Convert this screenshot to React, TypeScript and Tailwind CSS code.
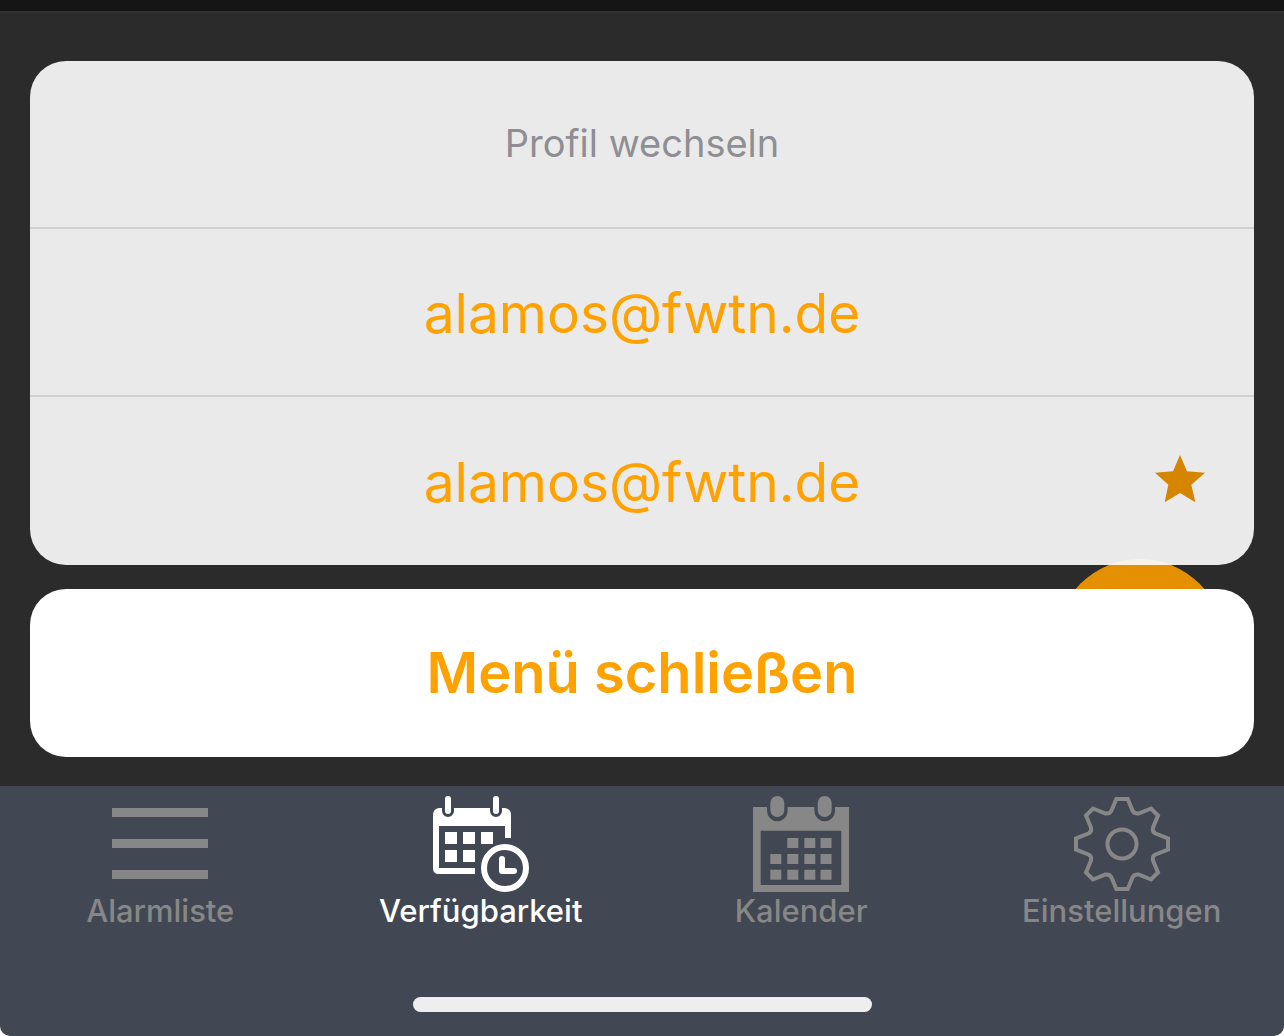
import type { ComponentType } from 'react'
import { clsx } from 'clsx'

function ListIcon() {
  return (
    <svg className="size-24" viewBox="0 0 96 96" stroke="currentColor" strokeWidth="9" aria-hidden="true">
      <path d="M0 16.5H96M0 47.5H96M0 78.5H96" />
    </svg>
  )
}

function AvailabilityIcon() {
  return (
    <svg className="size-24" viewBox="0 0 96 96" fill="currentColor" aria-hidden="true">
      {/* Calendar frame, cut out around the rings */}
      <path d="M6 12H9V15A6 6 0 0 0 21 15V12H57V15A6 6 0 0 0 69 15V12H72Q78 13 78 19V42H72V30H6V72H42V78H6Q0 78 0 72V19Q0 13 6 12Z" />
      <rect x="12" y="0" width="6" height="18" rx="3" />
      <rect x="60" y="0" width="6" height="18" rx="3" />
      {/* Days */}
      <path d="M12 36h12v12H12zM30 36h12v12H30zM48 36h12v12H48zM12 54h12v12H12zM30 54h12v12H30z" />
      {/* Clock */}
      <circle cx="72" cy="72" r="21" fill="none" stroke="currentColor" strokeWidth="6" />
      <path d="M69 63V75H81" fill="none" stroke="currentColor" strokeWidth="6" strokeLinecap="round" strokeLinejoin="round" />
    </svg>
  )
}

function CalendarIcon() {
  return (
    <svg className="size-24" viewBox="0 0 96 96" fill="currentColor" aria-hidden="true">
      <path
        fillRule="evenodd"
        d="M0 11H14V15A10.3 10.3 0 0 0 34.6 15V11H61.4V15A10.3 10.3 0 0 0 82 15V11H96V96H0ZM7.7 34.7V89H88.3V34.7Z"
      />
      <rect x="17.3" y="0" width="14" height="21" rx="7" />
      <rect x="64.7" y="0" width="14" height="21" rx="7" />
      <path d="M34.3 42h11v10h-11zM51.3 42h11v10h-11zM67.5 42h11v10h-11z" />
      <path d="M17.3 58h11v10h-11zM34.3 58h11v10h-11zM51.3 58h11v10h-11zM67.5 58h11v10h-11z" />
      <path d="M17.3 73.7h11v10h-11zM34.3 73.7h11v10h-11zM51.3 73.7h11v10h-11zM67.5 73.7h11v10h-11z" />
    </svg>
  )
}

function GearIcon() {
  return (
    <svg className="size-24" viewBox="0 0 96 96" fill="none" stroke="currentColor" strokeWidth="4" aria-hidden="true">
      <path d="M42.3 3H53.7L58.5 14.5Q60 18 64.5 17.5L77 12.5L84 19.5L79 31.5Q78 36 81.5 37.5L94 42.3V53.7L81.5 58.5Q78 60 79 64.5L84 76.5L77 83.5L64.5 78.5Q60 78 58.5 81.5L53.7 93H42.3L37.5 81.5Q36 78 31.5 78.5L19 83.5L12 76.5L17 64.5Q18 60 14.5 58.5L2 53.7V42.3L14.5 37.5Q18 36 17 31.5L12 19.5L19 12.5L31.5 17.5Q36 18 37.5 14.5Z" />
      <circle cx="48" cy="48" r="14.5" />
    </svg>
  )
}

function StarIcon() {
  return (
    <svg className="h-12 w-[50px]" viewBox="0 0 150 144" fill="currentColor" aria-hidden="true">
      <path d="M75 0L96 49L150 53L109 89L121 142L75 114L29 142L40 89L0 53L54 49Z" />
    </svg>
  )
}

const PROFILES = [
  { id: 1, email: 'alamos@fwtn.de', starred: false },
  { id: 2, email: 'alamos@fwtn.de', starred: true },
]

const TABS: { label: string; icon: ComponentType; active?: boolean }[] = [
  { label: 'Alarmliste', icon: ListIcon },
  { label: 'Verfügbarkeit', icon: AvailabilityIcon, active: true },
  { label: 'Kalender', icon: CalendarIcon },
  { label: 'Einstellungen', icon: GearIcon },
]

export default function App() {
  return (
    <div className="min-h-screen bg-white font-['Inter',sans-serif]">
      <div className="flex min-h-screen flex-col overflow-hidden rounded-b-[10px] bg-[#424853]">
        <div className="h-[11px] bg-[#151515]" />

        <main className="relative border-t-2 border-[#333333] bg-[#2b2b2b] px-[30px] pt-12 pb-[29px]">
          {/* Floating button, mostly hidden by the sheet */}
          <div className="absolute right-[60px] bottom-[59px] size-[168px] rounded-full bg-[#e49002]" />

          <div className="relative flex flex-col gap-6">
            <div className="divide-y-2 divide-[#d0d0d0] overflow-hidden rounded-[36px] bg-[#fbfbfb]/92">
              <h1 className="flex h-[168px] items-center justify-center pb-0.5 text-[38px] text-[#8e8e93]">
                Profil wechseln
              </h1>
              {PROFILES.map(({ id, email, starred }) => (
                <button
                  key={id}
                  className="relative flex h-[168px] w-full items-center justify-center pt-0.5 text-[55px] text-[#ffa200]"
                >
                  {email}
                  {starred && (
                    <span className="absolute top-[58px] right-[49px] text-[#d68500]">
                      <StarIcon />
                    </span>
                  )}
                </button>
              ))}
            </div>

            <button className="h-[168px] rounded-[36px] bg-white text-[56px] font-semibold text-[#ffa200]">
              Menü schließen
            </button>
          </div>
        </main>

        <nav className="flex pt-[10px] pr-0.5">
          {TABS.map(({ label, icon: Icon, active }) => (
            <a
              key={label}
              href="#"
              aria-current={active ? 'page' : undefined}
              className={clsx(
                'flex flex-1 flex-col items-center text-[31px] leading-[38px] font-medium',
                active ? 'text-white' : 'text-[#878787]'
              )}
            >
              <Icon />
              {label}
            </a>
          ))}
        </nav>

        {/* Home indicator */}
        <div className="mx-auto mt-auto mb-6 h-[15px] w-[459px] rounded-full bg-[#eeeeee]" />
      </div>
    </div>
  )
}
